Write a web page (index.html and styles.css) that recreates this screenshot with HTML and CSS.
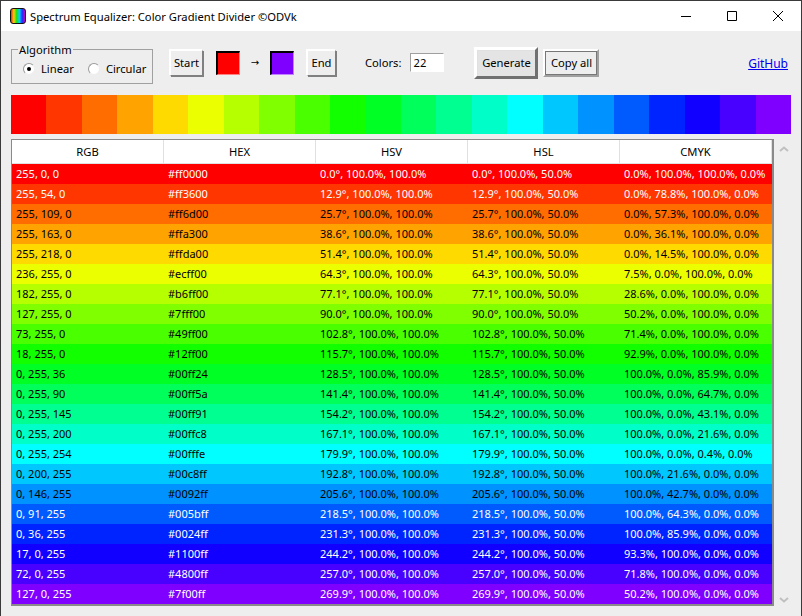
FILE: index.html
```html
<!DOCTYPE html>
<html lang="en">
<head>
    <meta charset="UTF-8">
    <title>Spectrum Equalizer: Color Gradient Divider ©ODVk</title>
    <link rel="stylesheet" href="styles.css">
</head>
<body>
    <div class="window">
        <div class="titlebar">
            <div class="app-icon"></div>
            <span class="title">Spectrum Equalizer: Color Gradient Divider ©ODVk</span>
            <div class="win-controls">
                <svg class="win-btn" width="46" height="31" viewBox="0 0 46 31"><path d="M18 15.5H28" stroke="#000" fill="none"/></svg>
                <svg class="win-btn" width="46" height="31" viewBox="0 0 46 31"><path d="M18.5 10.5H27.5V19.5H18.5Z" stroke="#000" fill="none"/></svg>
                <svg class="win-btn" width="46" height="31" viewBox="0 0 46 31"><path d="M18 10L28 20M28 10L18 20" stroke="#000" fill="none"/></svg>
            </div>
        </div>

        <div class="toolbar">
            <fieldset class="algorithm">
                <legend>Algorithm</legend>
                <label class="radio"><span class="radio-dot checked"></span>Linear</label>
                <label class="radio"><span class="radio-dot"></span>Circular</label>
            </fieldset>
            <button class="btn btn-start">Start</button>
            <div class="color-box color-start"></div>
            <span class="arrow">→</span>
            <div class="color-box color-end"></div>
            <button class="btn btn-end">End</button>
            <label class="colors-label" for="colors">Colors:</label>
            <input class="colors-input" id="colors" type="text" value="22">
            <button class="btn btn-generate">Generate</button>
            <button class="btn btn-copy">Copy all</button>
            <a class="github" href="#">GitHub</a>
        </div>

        <div class="gradient">
            <div style="background-color: #ff0000"></div>
            <div style="background-color: #ff3600"></div>
            <div style="background-color: #ff6d00"></div>
            <div style="background-color: #ffa300"></div>
            <div style="background-color: #ffda00"></div>
            <div style="background-color: #ecff00"></div>
            <div style="background-color: #b6ff00"></div>
            <div style="background-color: #7fff00"></div>
            <div style="background-color: #49ff00"></div>
            <div style="background-color: #12ff00"></div>
            <div style="background-color: #00ff24"></div>
            <div style="background-color: #00ff5a"></div>
            <div style="background-color: #00ff91"></div>
            <div style="background-color: #00ffc8"></div>
            <div style="background-color: #00fffe"></div>
            <div style="background-color: #00c8ff"></div>
            <div style="background-color: #0092ff"></div>
            <div style="background-color: #005bff"></div>
            <div style="background-color: #0024ff"></div>
            <div style="background-color: #1100ff"></div>
            <div style="background-color: #4800ff"></div>
            <div style="background-color: #7f00ff"></div>
        </div>

        <div class="table-area">
            <table class="colors-table">
                <thead>
                    <tr><th>RGB</th><th>HEX</th><th>HSV</th><th>HSL</th><th>CMYK</th></tr>
                </thead>
                <tbody>
                    <tr class="light" style="background-color: #ff0000"><td>255, 0, 0</td><td>#ff0000</td><td>0.0°, 100.0%, 100.0%</td><td>0.0°, 100.0%, 50.0%</td><td>0.0%, 100.0%, 100.0%, 0.0%</td></tr>
                    <tr class="light" style="background-color: #ff3600"><td>255, 54, 0</td><td>#ff3600</td><td>12.9°, 100.0%, 100.0%</td><td>12.9°, 100.0%, 50.0%</td><td>0.0%, 78.8%, 100.0%, 0.0%</td></tr>
                    <tr style="background-color: #ff6d00"><td>255, 109, 0</td><td>#ff6d00</td><td>25.7°, 100.0%, 100.0%</td><td>25.7°, 100.0%, 50.0%</td><td>0.0%, 57.3%, 100.0%, 0.0%</td></tr>
                    <tr style="background-color: #ffa300"><td>255, 163, 0</td><td>#ffa300</td><td>38.6°, 100.0%, 100.0%</td><td>38.6°, 100.0%, 50.0%</td><td>0.0%, 36.1%, 100.0%, 0.0%</td></tr>
                    <tr style="background-color: #ffda00"><td>255, 218, 0</td><td>#ffda00</td><td>51.4°, 100.0%, 100.0%</td><td>51.4°, 100.0%, 50.0%</td><td>0.0%, 14.5%, 100.0%, 0.0%</td></tr>
                    <tr style="background-color: #ecff00"><td>236, 255, 0</td><td>#ecff00</td><td>64.3°, 100.0%, 100.0%</td><td>64.3°, 100.0%, 50.0%</td><td>7.5%, 0.0%, 100.0%, 0.0%</td></tr>
                    <tr style="background-color: #b6ff00"><td>182, 255, 0</td><td>#b6ff00</td><td>77.1°, 100.0%, 100.0%</td><td>77.1°, 100.0%, 50.0%</td><td>28.6%, 0.0%, 100.0%, 0.0%</td></tr>
                    <tr style="background-color: #7fff00"><td>127, 255, 0</td><td>#7fff00</td><td>90.0°, 100.0%, 100.0%</td><td>90.0°, 100.0%, 50.0%</td><td>50.2%, 0.0%, 100.0%, 0.0%</td></tr>
                    <tr style="background-color: #49ff00"><td>73, 255, 0</td><td>#49ff00</td><td>102.8°, 100.0%, 100.0%</td><td>102.8°, 100.0%, 50.0%</td><td>71.4%, 0.0%, 100.0%, 0.0%</td></tr>
                    <tr style="background-color: #12ff00"><td>18, 255, 0</td><td>#12ff00</td><td>115.7°, 100.0%, 100.0%</td><td>115.7°, 100.0%, 50.0%</td><td>92.9%, 0.0%, 100.0%, 0.0%</td></tr>
                    <tr style="background-color: #00ff24"><td>0, 255, 36</td><td>#00ff24</td><td>128.5°, 100.0%, 100.0%</td><td>128.5°, 100.0%, 50.0%</td><td>100.0%, 0.0%, 85.9%, 0.0%</td></tr>
                    <tr style="background-color: #00ff5a"><td>0, 255, 90</td><td>#00ff5a</td><td>141.4°, 100.0%, 100.0%</td><td>141.4°, 100.0%, 50.0%</td><td>100.0%, 0.0%, 64.7%, 0.0%</td></tr>
                    <tr style="background-color: #00ff91"><td>0, 255, 145</td><td>#00ff91</td><td>154.2°, 100.0%, 100.0%</td><td>154.2°, 100.0%, 50.0%</td><td>100.0%, 0.0%, 43.1%, 0.0%</td></tr>
                    <tr style="background-color: #00ffc8"><td>0, 255, 200</td><td>#00ffc8</td><td>167.1°, 100.0%, 100.0%</td><td>167.1°, 100.0%, 50.0%</td><td>100.0%, 0.0%, 21.6%, 0.0%</td></tr>
                    <tr style="background-color: #00fffe"><td>0, 255, 254</td><td>#00fffe</td><td>179.9°, 100.0%, 100.0%</td><td>179.9°, 100.0%, 50.0%</td><td>100.0%, 0.0%, 0.4%, 0.0%</td></tr>
                    <tr style="background-color: #00c8ff"><td>0, 200, 255</td><td>#00c8ff</td><td>192.8°, 100.0%, 100.0%</td><td>192.8°, 100.0%, 50.0%</td><td>100.0%, 21.6%, 0.0%, 0.0%</td></tr>
                    <tr style="background-color: #0092ff"><td>0, 146, 255</td><td>#0092ff</td><td>205.6°, 100.0%, 100.0%</td><td>205.6°, 100.0%, 50.0%</td><td>100.0%, 42.7%, 0.0%, 0.0%</td></tr>
                    <tr class="light" style="background-color: #005bff"><td>0, 91, 255</td><td>#005bff</td><td>218.5°, 100.0%, 100.0%</td><td>218.5°, 100.0%, 50.0%</td><td>100.0%, 64.3%, 0.0%, 0.0%</td></tr>
                    <tr class="light" style="background-color: #0024ff"><td>0, 36, 255</td><td>#0024ff</td><td>231.3°, 100.0%, 100.0%</td><td>231.3°, 100.0%, 50.0%</td><td>100.0%, 85.9%, 0.0%, 0.0%</td></tr>
                    <tr class="light" style="background-color: #1100ff"><td>17, 0, 255</td><td>#1100ff</td><td>244.2°, 100.0%, 100.0%</td><td>244.2°, 100.0%, 50.0%</td><td>93.3%, 100.0%, 0.0%, 0.0%</td></tr>
                    <tr class="light" style="background-color: #4800ff"><td>72, 0, 255</td><td>#4800ff</td><td>257.0°, 100.0%, 100.0%</td><td>257.0°, 100.0%, 50.0%</td><td>71.8%, 100.0%, 0.0%, 0.0%</td></tr>
                    <tr class="light" style="background-color: #7f00ff"><td>127, 0, 255</td><td>#7f00ff</td><td>269.9°, 100.0%, 100.0%</td><td>269.9°, 100.0%, 50.0%</td><td>50.2%, 100.0%, 0.0%, 0.0%</td></tr>
                </tbody>
            </table>
            <div class="scrollbar">
                <svg width="12" height="8" viewBox="0 0 12 8"><path d="M2 6L6 2.5L10 6" stroke="#c0c0c0" stroke-width="2" fill="none"/></svg>
                <svg width="12" height="8" viewBox="0 0 12 8"><path d="M2 2L6 5.5L10 2" stroke="#c0c0c0" stroke-width="2" fill="none"/></svg>
            </div>
        </div>
    </div>
</body>
</html>
```

FILE: styles.css
```css
* {
    box-sizing: border-box;
}

html, body {
    margin: 0;
    height: 100%;
    overflow: hidden;
}

body {
    font-family: "Noto Sans", Tahoma, sans-serif;
    font-size: 11.2px;
    color: black;
}

.window {
    display: flex;
    flex-direction: column;
    height: 616px;
    background-color: #eeeeee;
    border: 1px solid #3a3a3a;
    border-bottom: none;
}

.titlebar {
    display: flex;
    align-items: center;
    height: 30px;
    flex-shrink: 0;
    padding-left: 9px;
    background-color: white;
}

.app-icon {
    width: 16px;
    height: 16px;
    margin-right: 4px;
    border: 1px solid #111;
    border-radius: 3px;
    background: linear-gradient(to right, #ff2020, #ffd000, #20e020, #00d0ff, #2030ff, #c000c0);
}

.win-controls {
    display: flex;
    margin-left: auto;
}

.win-btn {
    display: block;
}

.toolbar {
    display: flex;
    align-items: center;
    height: 64px;
    flex-shrink: 0;
    padding-left: 10px;
    padding-right: 13px;
}

.algorithm {
    display: flex;
    align-items: center;
    gap: 14px;
    width: 142px;
    height: 41px;
    margin: 0;
    padding: 0 0 2px 11px;
    border: 1px solid #a0a0a0;
}

.algorithm legend {
    padding: 0 1px;
    margin-left: -5px;
    line-height: 14px;
}

.radio {
    display: flex;
    align-items: center;
    gap: 6px;
}

.radio-dot {
    display: flex;
    align-items: center;
    justify-content: center;
    width: 12px;
    height: 12px;
    border-radius: 50%;
    background-color: white;
    border: 1px solid;
    border-color: #9a9a9a #eeeeee #eeeeee #9a9a9a;
}

.radio-dot.checked::after {
    content: "";
    width: 4px;
    height: 4px;
    border-radius: 50%;
    background-color: black;
}

.btn {
    height: 26px;
    padding: 0;
    font-family: inherit;
    font-size: inherit;
    color: black;
    background-color: #eeeeee;
    border: 1px solid;
    border-color: white #808080 #808080 white;
    box-shadow: 1px 1px 0 #808080, -1px -1px 0 white;
}

.btn-start {
    width: 33px;
    margin: -1px 0 0 17px;
}

.color-box {
    width: 24px;
    height: 24px;
    margin-top: -1px;
    border: 1px solid;
    border-top: 2px solid black;
    border-left: 2px solid black;
}

.color-start {
    margin-left: 13px;
    background-color: #ff0000;
    border-right-color: #ff8080;
    border-bottom-color: #ff8080;
}

.color-end {
    background-color: #7f00ff;
    border-right-color: #c080ff;
    border-bottom-color: #c080ff;
}

.arrow {
    width: 30px;
    margin-top: -1px;
    text-align: center;
    font-family: "DejaVu Sans", sans-serif;
    font-size: 10px;
}

.btn-end {
    width: 29px;
    margin: -1px 0 0 13px;
}

.colors-label {
    margin: -1px 0 0 29px;
}

.colors-input {
    width: 34px;
    height: 19px;
    margin: -1px 0 0 9px;
    padding: 0 0 0 2px;
    font-family: inherit;
    font-size: inherit;
    background-color: white;
    border: 1px solid;
    border-color: #a0a0a0 white white #a0a0a0;
    outline: none;
}

.btn-generate {
    width: 64px;
    height: 32px;
    margin: -1px 0 0 30px;
    border-width: 3px;
    border-color: white #707070 #707070 white;
    box-shadow: inset 1px 1px 0 #e0e0e0;
    background-color: #e4e4e4;
}

.btn-copy {
    width: 56px;
    height: 28px;
    margin: -1px 0 0 5px;
    border-width: 2px;
    border-color: white #a0a0a0 #a0a0a0 white;
    box-shadow: inset 0 0 0 1px #777;
}

.github {
    margin-left: auto;
    color: #0000ee;
    font-size: 12px;
    text-decoration: underline;
}

.gradient {
    display: flex;
    height: 39px;
    flex-shrink: 0;
    margin: 0 10px;
}

.gradient div {
    flex: 1;
}

.table-area {
    display: flex;
    margin: 5px 0 0 10px;
}

.colors-table {
    width: 763px;
    table-layout: fixed;
    border-collapse: separate;
    border-spacing: 0;
    border: 1px solid #8a8a8a;
    border-bottom-width: 2px;
    border-right-width: 2px;
    background-color: white;
}

.colors-table th {
    height: 24px;
    padding: 0;
    font-weight: normal;
    border-right: 1px solid #e0e0e0;
    border-bottom: 1px solid #e0e0e0;
}

.colors-table td {
    height: 20px;
    padding: 0 0 2px 4px;
    font-size: 11px;
    white-space: nowrap;
}

.colors-table tr.light td {
    color: white;
}

.scrollbar {
    display: flex;
    flex-direction: column;
    justify-content: space-between;
    width: 17px;
    padding: 6px 0 2px 4px;
}

.scrollbar svg {
    display: block;
}
```
